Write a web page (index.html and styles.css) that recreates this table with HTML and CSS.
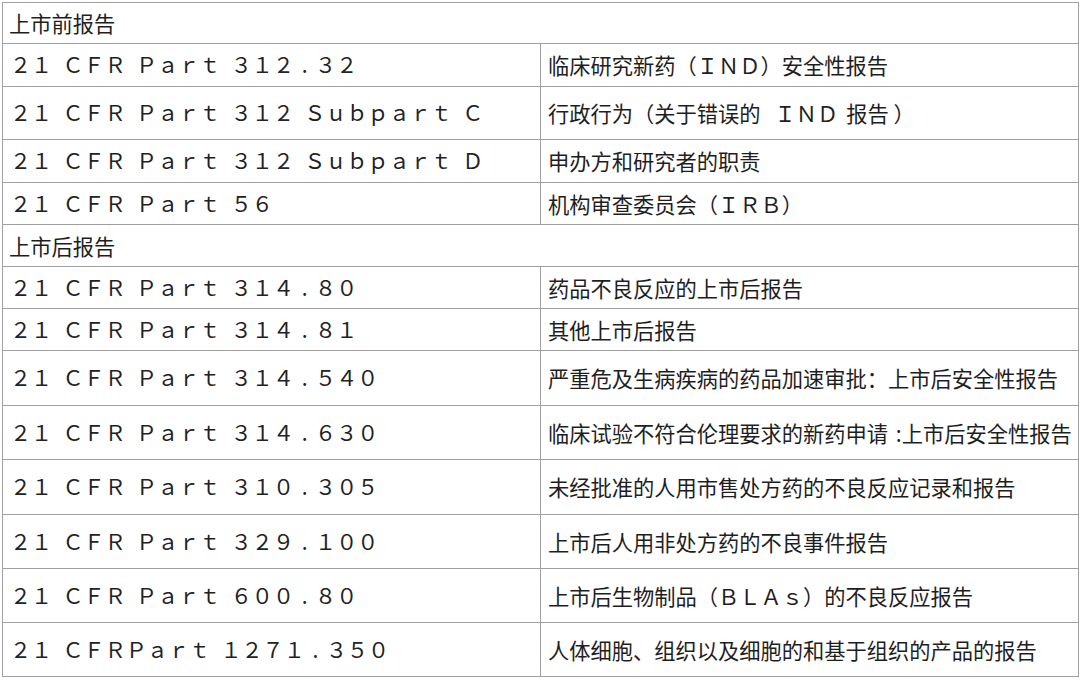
FILE: index.html
```html
<!DOCTYPE html>
<html lang="zh-CN">
<head>
<meta charset="utf-8">
<title>FDA 安全性报告法规</title>
<link rel="stylesheet" href="styles.css">
</head>
<body>
<table class="reg">
  <colgroup><col class="c1"><col class="c2"></colgroup>
  <tbody>
    <tr class="h41 sec"><td colspan="2">上市前报告</td></tr>
    <tr class="h43"><td class="code">21 CFR Part 312<span class="dot">.</span>32</td><td class="desc">临床研究新药（<span class="fw">IND</span>）安全性报告</td></tr>
    <tr class="h53 dark"><td class="code">21 CFR Part 312 Subpart C</td><td class="desc">行政行为（关于错误的<span class="fw gap">IND</span>报告 ）</td></tr>
    <tr class="h43"><td class="code">21 CFR Part 312 Subpart D</td><td class="desc">申办方和研究者的职责</td></tr>
    <tr class="h42"><td class="code">21 CFR Part 56</td><td class="desc">机构审查委员会（<span class="fw">IRB</span>）</td></tr>
    <tr class="h42 sec"><td colspan="2">上市后报告</td></tr>
    <tr class="h42"><td class="code">21 CFR Part 314<span class="dot">.</span>80</td><td class="desc">药品不良反应的上市后报告</td></tr>
    <tr class="h42"><td class="code">21 CFR Part 314<span class="dot">.</span>81</td><td class="desc">其他上市后报告</td></tr>
    <tr class="h55"><td class="code">21 CFR Part 314<span class="dot">.</span>540</td><td class="desc">严重危及生病疾病的药品加速审批<span class="pc">：</span>上市后安全性报告</td></tr>
    <tr class="h54"><td class="code">21 CFR Part 314<span class="dot">.</span>630</td><td class="desc">临床试验不符合伦理要求的新药申请<span class="sp"> :</span>上市后安全性报告</td></tr>
    <tr class="h55"><td class="code">21 CFR Part 310<span class="dot">.</span>305</td><td class="desc">未经批准的人用市售处方药的不良反应记录和报告</td></tr>
    <tr class="h54"><td class="code">21 CFR Part 329<span class="dot">.</span>100</td><td class="desc">上市后人用非处方药的不良事件报告</td></tr>
    <tr class="h54"><td class="code">21 CFR Part 600<span class="dot">.</span>80</td><td class="desc">上市后生物制品（<span class="fw">BLAs</span>）的不良反应报告</td></tr>
    <tr class="h54"><td class="code">21 CFRPart 1271<span class="dot">.</span>350</td><td class="desc">人体细胞、组织以及细胞的和基于组织的产品的报告</td></tr>
  </tbody>
</table>
</body>
</html>
```
FILE: styles.css
```css
html, body {
  margin: 0;
  padding: 0;
  background: #ffffff;
}

body {
  padding: 2px 0 0 2px;
  font-family: "Noto Sans CJK SC", "Noto Sans", sans-serif;
  color: #1e1e1e;
}

.reg {
  border-collapse: collapse;
  width: 1076px;
  table-layout: fixed;
  font-size: 21.25px;
}

.c1 { width: 538px; }
.c2 { width: 538px; }

.reg td {
  border: 1px solid #a0a0a0;
  padding: 0 0 0 7px;
  vertical-align: middle;
  white-space: nowrap;
  line-height: 1.2;
}

.reg .sec td {
  padding-left: 6px;
}

.reg .code {
  font-family: "Noto Sans CJK TC", "Noto Sans CJK SC", sans-serif;
  font-size: 21.1px;
  font-variant-east-asian: full-width;
  word-spacing: -10.8px;
  padding-left: 7px;
  color: #222222;
}

.dot {
  display: inline-block;
  width: 21.1px;
  text-align: center;
  font-variant-east-asian: normal;
}

.reg .desc {
  padding-left: 7px;
}

.fw {
  font-variant-east-asian: full-width;
}

.fw.gap {
  margin: 0 8px 0 14px;
}

.pc {
  font-family: "Noto Sans CJK TC", sans-serif;
}

.sp {
  word-spacing: 3px;
}

.reg .dark td {
  border-top-color: #3c3c3c;
}

.h41 { height: 41px; }
.h42 { height: 42px; }
.h43 { height: 43px; }
.h53 { height: 53px; }
.h54 { height: 54px; }
.h55 { height: 55px; }
```
